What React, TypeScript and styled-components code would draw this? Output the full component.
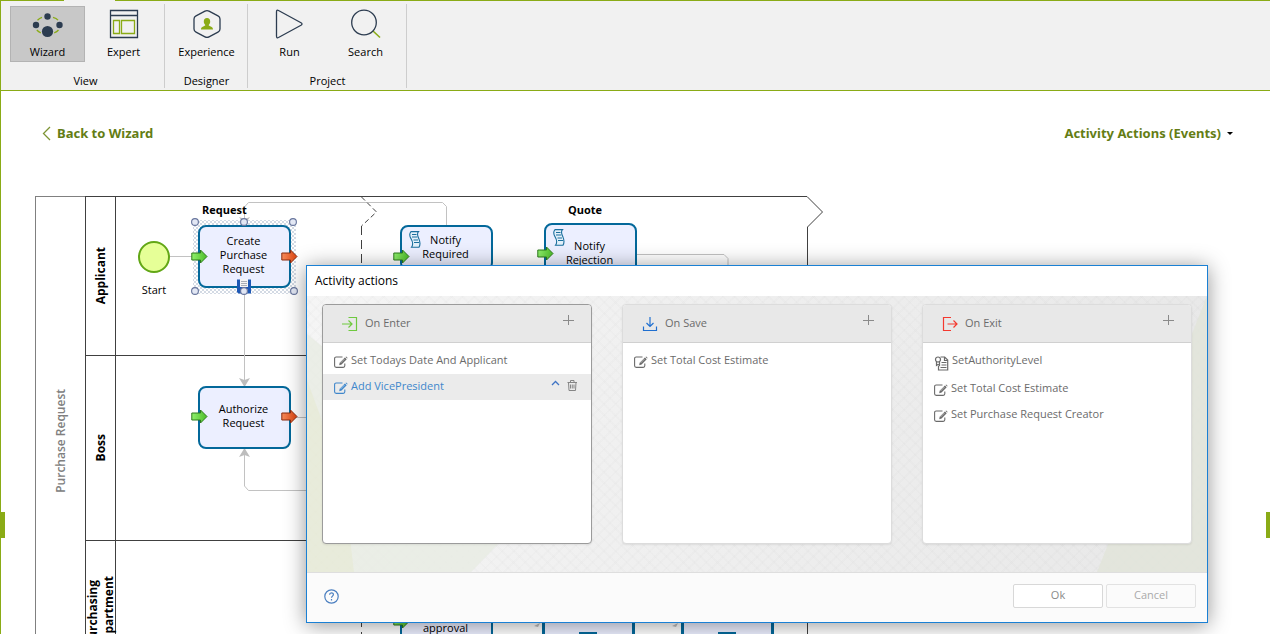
import React from "react";
import styled, { createGlobalStyle, css } from "styled-components";

const GREEN = "#8aab16";
const INK = "#2c3c50";

const GlobalStyle = createGlobalStyle`
  *, *::before, *::after { box-sizing: border-box; }
  body {
    margin: 0;
    background: #fff;
    color: #000;
    font: 11px/14px "Open Sans", "Noto Sans", sans-serif;
  }
  button { font: inherit; color: inherit; margin: 0; padding: 0; border: 0; background: none; cursor: pointer; }
  h1, h2, ul, li { margin: 0; padding: 0; list-style: none; font-weight: 400; }
  svg { display: block; flex: none; }
`;

const Page = styled.div`
  position: relative;
  display: flex;
  flex-direction: column;
  height: 100vh;
  overflow: hidden;
  border-left: 1px solid ${GREEN};
`;

/* ---------- ribbon ---------- */

const TabEdge = styled.div`
  display: flex;
  height: 1px;
  background: #f1f1f1;
  &::before { content: ""; width: 63px; background: ${GREEN}; }
  &::after { content: ""; flex: 1; margin-left: 51px; background: ${GREEN}; }
`;

const Ribbon = styled.header`
  display: flex;
  gap: 1px;
  padding: 3px 0 2px 6px;
  background: #f1f1f1;
  border-bottom: 1px solid ${GREEN};
`;

const RibbonGroup = styled.section`
  display: flex;
  flex-direction: column;
  justify-content: space-between;
  height: 84px;
  padding: 2px 3px 0;
  border-right: 1px solid #cdcdcd;
  text-align: center;
`;

const RibbonButtons = styled.div`
  display: flex;
  gap: 1px;
`;

const RibbonButton = styled.button<{ $active?: boolean }>`
  display: flex;
  flex-direction: column;
  align-items: center;
  gap: 4px;
  width: 75px;
  height: 56px;
  padding-top: 2px;
  border: 1px solid ${(p) => (p.$active ? "#b3b3b3" : "transparent")};
  background: ${(p) => (p.$active ? "#c8c8c8" : "transparent")};
`;

const GroupLabel = styled.h2`
  font-size: 11px;
  line-height: 14px;
`;

/* ---------- navigation row ---------- */

const NavRow = styled.nav`
  display: flex;
  justify-content: space-between;
  align-items: center;
  height: 84px;
  padding: 0 37px 0 41px;
`;

const NavLink = styled.a`
  display: flex;
  align-items: center;
  gap: 6px;
  color: #647d14;
  font: 700 13px/18px "Noto Sans", "Open Sans", sans-serif;
  text-decoration: none;
`;

const NavButton = styled(NavLink).attrs({ as: "button" })``;

const Caret = styled.span`
  border: 3px solid transparent;
  border-top-color: #000;
  border-bottom: 0;
`;

/* ---------- diagram ---------- */

const Canvas = styled.main`
  position: relative;
  flex: 1;
  min-height: 0;
  margin: 21px 0 0 34px;
`;

const Pool = styled.div`
  display: flex;
  width: 772px;
  border-left: 1px solid #808080;
`;

const VerticalText = styled.span`
  writing-mode: vertical-rl;
  transform: rotate(180deg);
  text-align: center;
`;

const PoolTitle = styled.div`
  display: flex;
  align-items: center;
  justify-content: center;
  width: 49px;
  border-top: 1px solid #808080;
  color: #808080;
  font-size: 12px;
  line-height: 16px;
  font-weight: 600;
`;

const Lanes = styled.div`
  flex: 1;
`;

const Lane = styled.div<{ $height: number }>`
  height: ${(p) => p.$height}px;
  border: solid #404040;
  border-width: 1px 0 0 1px;
`;

const LaneTitle = styled.div`
  display: flex;
  align-items: center;
  justify-content: center;
  width: 30px;
  height: 100%;
  border-right: 1px solid #404040;
  font-size: 12px;
  line-height: 16px;
  font-weight: 700;
`;

const Connectors = styled.svg`
  position: absolute;
  top: 0;
  left: 0;
`;

const placed = css<{ $x: number; $y: number }>`
  position: absolute;
  left: ${(p) => p.$x}px;
  top: ${(p) => p.$y}px;
`;

const PhaseLabel = styled.div<{ $x: number; $y: number }>`
  ${placed}
  font-weight: 700;
`;

const StartEvent = styled.div<{ $x: number; $y: number }>`
  ${placed}
  display: flex;
  flex-direction: column;
  align-items: center;
  gap: 10px;
  &::before {
    content: "";
    width: 32px;
    height: 32px;
    border: 2px solid #62a716;
    border-radius: 50%;
    background: #e6ff97;
  }
`;

const Task = styled.div<{ $x: number; $y: number; $h?: number; $thick?: boolean }>`
  ${placed}
  display: flex;
  align-items: center;
  justify-content: center;
  width: 93px;
  height: ${(p) => p.$h ?? 63}px;
  padding: 0 14px 3px 12px;
  border: ${(p) => (p.$thick ? 3 : 2)}px solid #03689a;
  border-radius: 8px;
  background: #ecefff;
  text-align: center;
`;

const SelectionHalo = styled.div<{ $x: number; $y: number }>`
  ${placed}
  width: 103px;
  height: 74px;
  background:
    radial-gradient(circle, #d3dae4 1px, transparent 1px) 0 0 / 4px 4px,
    radial-gradient(circle, #d3dae4 1px, #fff 1px) 2px 2px / 4px 4px;
`;

const Overlay = styled.svg<{ $x: number; $y: number }>`
  ${placed}
`;

const EdgeHandle = styled.div<{ $side: "left" | "right" }>`
  position: absolute;
  top: 512px;
  ${(p) => (p.$side === "left" ? "left: -1px" : "right: 0")};
  width: ${(p) => (p.$side === "left" ? 5 : 4)}px;
  height: 26px;
  background: ${GREEN};
`;

/* ---------- dialog ---------- */

const Dialog = styled.section`
  position: absolute;
  top: 265px;
  left: 305px;
  right: 62px;
  border: 1px solid #1a80d4;
  background: #fff;
  box-shadow: 0 2px 20px rgba(0, 0, 0, 0.42);
`;

const DialogTitle = styled.h1`
  padding: 7px 8px;
  font-size: 12px;
  line-height: 16px;
`;

const DialogBody = styled.div`
  position: relative;
  display: grid;
  grid-template-columns: repeat(3, 1fr);
  gap: 30px;
  padding: 8px 15px 28px;
  background:
    repeating-linear-gradient(45deg, rgba(0, 0, 0, 0.01) 0 2px, transparent 2px 8px),
    repeating-linear-gradient(-45deg, rgba(0, 0, 0, 0.01) 0 2px, transparent 2px 8px),
    linear-gradient(100deg, #f5f5f5, #eeeeee 50%, #e8e8e8);
`;

const Facets = styled.svg<{ $right?: boolean }>`
  position: absolute;
  bottom: 0;
  ${(p) => (p.$right ? "right: 0" : "left: 0")};
  opacity: 0.8;
`;

const Card = styled.section<{ $active?: boolean }>`
  position: relative;
  min-height: 240px;
  border: 1px solid ${(p) => (p.$active ? "#9b9b9b" : "#dcdcdc")};
  border-radius: 4px;
  background: #fff;
  color: #6b6b6b;
  box-shadow: 0 1px 2px rgba(0, 0, 0, 0.08);
  overflow: hidden;
`;

const CardHeader = styled.header`
  display: flex;
  align-items: center;
  gap: 7px;
  height: 38px;
  padding: 0 17px 0 19px;
  border-bottom: 1px solid #d0d0d0;
  background: #e8e8e8;
`;

const CardTitle = styled.h2`
  flex: 1;
  padding-bottom: 2px;
  font-size: 11px;
  line-height: 14px;
`;

const IconButton = styled.button`
  display: flex;
  padding-bottom: 8px;
`;

const ActionList = styled.ul`
  padding-top: 5px;
`;

const ActionRow = styled.li<{ $selected?: boolean; $tall?: boolean }>`
  display: flex;
  align-items: center;
  gap: 3px;
  height: ${(p) => (p.$tall ? 28 : 26)}px;
  padding: 0 13px ${(p) => (p.$tall ? 4 : 2)}px 11px;
  background: ${(p) => (p.$selected ? "#ebebeb" : "transparent")};
  color: ${(p) => (p.$selected ? "#4087cb" : "#6b6b6b")};
`;

const ActionIcon = styled.span<{ $tall?: boolean }>`
  padding-top: ${(p) => (p.$tall ? 6 : 3)}px;
`;

const ActionName = styled.span`
  flex: 1;
`;

const RowTools = styled.span`
  display: flex;
  align-items: center;
  gap: 7px;
  padding-bottom: 2px;
`;

const DialogFooter = styled.footer`
  display: flex;
  align-items: center;
  gap: 3px;
  height: 50px;
  padding: 0 11px 3px 17px;
  border-top: 1px solid #dedede;
  background: #fbfbfb;
`;

const HelpButton = styled.button`
  margin-right: auto;
`;

const DialogButton = styled.button<{ $muted?: boolean }>`
  width: 90px;
  height: 24px;
  padding-bottom: 2px;
  border: 1px solid ${(p) => (p.$muted ? "#e2e2e2" : "#d8d8d8")};
  border-radius: 2px;
  background: ${(p) => (p.$muted ? "#fbfbfb" : "#fff")};
  color: ${(p) => (p.$muted ? "#aaaaaa" : "#8a8a8a")};
`;

/* ---------- icons ---------- */

const ribbonIcon = { width: 32, height: 32, viewBox: "0 0 32 32", fill: "none", stroke: INK, strokeWidth: 1.3 };

const WizardIcon = () => (
  <svg {...ribbonIcon}>
    <path
      d="M5.500 11.200Q7.500 9 10 8.300M21 8.300Q24.500 9.200 26 11.200M4.800 21Q6.500 23 8.800 23.800M22.200 23.800Q25 23 26.500 21"
      stroke={GREEN}
    />
    <g fill={INK} stroke="none">
      <circle cx="15.500" cy="7.500" r="3.200" />
      <circle cx="4" cy="16" r="3.200" />
      <circle cx="27.500" cy="16" r="3.200" />
      <circle cx="15.500" cy="22.500" r="5.600" />
    </g>
  </svg>
);

const ExpertIcon = () => (
  <svg {...ribbonIcon}>
    <path d="M2.500 1.500h27v27h-27zM2.500 6.500h27" />
    <path d="M5.500 11.500h6v13h-6zM13.500 11.500h13v13h-13z" stroke={GREEN} />
  </svg>
);

const ExperienceIcon = () => (
  <svg {...ribbonIcon}>
    <path d="M14 2.100q2-1.100 4 0l9 4.700q2 1 2 3.200v10q0 2.200-2 3.200l-9 4.700q-2 1.100-4 0l-9-4.700q-2-1-2-3.200v-10q0-2.200 2-3.200z" />
    <path
      d="M16 9a3.200 3.500 0 0 1 3.200 3.500c0 1.800-.7 2.700-1.500 3.500 0 1.500 4.300 1 4.300 4.500H10c0-3.500 4.300-3 4.300-4.500-.8-.8-1.500-1.700-1.500-3.500A3.200 3.500 0 0 1 16 9z"
      fill={GREEN}
      stroke="none"
    />
  </svg>
);

const RunIcon = () => (
  <svg {...ribbonIcon}>
    <path d="M2.500 3q0-2.500 2-1.500l22.500 12.300q2 1.200 0 2.400l-22.500 12.300q-2 1-2-1.500z" />
  </svg>
);

const SearchIcon = () => (
  <svg {...ribbonIcon}>
    <path d="M23 22l7 6.500" stroke={GREEN} strokeWidth="1.600" />
    <circle cx="14" cy="13.500" r="12.300" />
  </svg>
);

const stageIcon = { width: 16, height: 16, viewBox: "0 0 16 16", fill: "none", strokeWidth: 1.2 };

const EnterIcon = () => (
  <svg {...stageIcon} stroke="#6fc93f">
    <path d="M6.500 1.500h8v13h-8M0 8h10M6.500 4.500L10 8l-3.500 3.500" />
  </svg>
);

const SaveIcon = () => (
  <svg {...stageIcon} stroke="#1f6fd0">
    <path d="M1.500 10.500v4h13v-4M8 1v9M4.500 7L8 10.500 11.500 7" />
  </svg>
);

const ExitIcon = () => (
  <svg {...stageIcon} stroke="#f4392f">
    <path d="M9 1.500H1.500v13H9M5.500 8H15M11.500 4.500L15 8l-3.500 3.500" />
  </svg>
);

const PlusIcon = () => (
  <svg width="12" height="12" viewBox="0 0 12 12" stroke="#8a8a8a">
    <path d="M6.500 1v10M1 6.500h11" />
  </svg>
);

const EditIcon = () => (
  <svg width="14" height="12" viewBox="0 0 14 12" fill="none" stroke="currentColor" strokeWidth="1.100">
    <path d="M8.500 1H2.200Q.6 1 .6 2.600v7.200q0 1.600 1.600 1.600h7q1.600 0 1.600-1.600V7.500" />
    <path d="M5.200 9.200l.5-2.500L10.900 1.500l1.800 1.800-5.100 5.200z" fill="currentColor" stroke="none" />
    <path d="M11.500 1l.7-.6 1.500 1.500-.6.700z" fill="currentColor" stroke="none" />
    <path d="M6.500 7l4-4" stroke="#fff" strokeWidth=".5" />
  </svg>
);

const PolicyIcon = () => (
  <svg width="15" height="15" viewBox="0 0 15 15" fill="none" stroke="currentColor" strokeWidth="1.200">
    <path d="M6.500 1h4.200l3 3v10H4.500v-4M10.500 1v3.500h3.200" />
    <circle cx="4" cy="3.500" r="2.500" />
    <path d="M2.500 5.500v4l1.500-1 1.500 1v-4M7.500 6.500h5M7.500 9h5M6.500 11.500h6" />
  </svg>
);

const ChevronUpIcon = () => (
  <svg width="9" height="10" viewBox="0 0 9 10" fill="none" stroke="#3f74c4" strokeWidth="1.300">
    <path d="M1 5l3.500-3.500L8 5" />
  </svg>
);

const TrashIcon = () => (
  <svg width="11" height="11" viewBox="0 0 11 11" fill="none" stroke="#858585">
    <path d="M.5 2.500h9.500M3.500 2.500v-2h3.500v2M1.500 2.500l.5 8h6.500l.5-8M3.500 4.500v4M5.250 4.500v4M7 4.500v4" />
  </svg>
);

const HelpIcon = () => (
  <svg width="15" height="15" viewBox="0 0 15 15" fill="none" stroke="#4b7fc0" strokeWidth="1.200">
    <circle cx="7.500" cy="7.500" r="6.700" />
    <path d="M5.600 5.800c0-2.600 3.800-2.500 3.800-.2 0 1.500-1.900 1.500-1.900 3.200M7.500 10v1.400" />
  </svg>
);

const BackIcon = () => (
  <svg width="9" height="15" viewBox="0 0 9 15" fill="none" stroke="#7d9434" strokeWidth="1.300">
    <path d="M8 1L1.500 7.500 8 14" />
  </svg>
);

const ScriptGlyph = ({ x, y }: { x: number; y: number }) => (
  <Overlay $x={x} $y={y} width="12" height="17" viewBox="0 0 12 17" fill="none" stroke="#1a6f9d" strokeWidth="1.100">
    <path
      d="M2 .6h7.500c-2 2-1 4.500.5 7.500 1.500 3.500 1.500 5.500 0 8.200H2.500c1.500-2 1.500-5-.3-8.200C.3 5 .3 2.500 2 .6z"
      fill="#e3f0fa"
    />
    <path d="M3 3.500h4.500M3 6h5M4.500 9h4.500M5 11.500h5" />
  </Overlay>
);

const ArrowMark = ({ x, y, tone }: { x: number; y: number; tone: "in" | "out" }) => (
  <Overlay $x={x} $y={y} width="17" height="15" viewBox="0 0 17 15">
    <defs>
      <linearGradient id="arrow-in" x2="1">
        <stop stopColor="#8ff06c" />
        <stop offset="1" stopColor="#4cbc28" />
      </linearGradient>
      <linearGradient id="arrow-out" x2="1">
        <stop stopColor="#f58a5c" />
        <stop offset="1" stopColor="#dd4510" />
      </linearGradient>
    </defs>
    <path
      d="M.8 4h8.700V1l6.500 6.500-6.500 6.500v-3H.8z"
      fill={`url(#arrow-${tone})`}
      stroke={tone === "in" ? "#2d7a1c" : "#8a2d10"}
    />
  </Overlay>
);

const FloppyMark = ({ x, y }: { x: number; y: number }) => (
  <Overlay $x={x} $y={y} width="14" height="15" viewBox="0 0 14 15">
    <path d="M0 .5h14v14H1.500L0 13z" fill="#1d58b5" />
    <path d="M3 0h8v8H3z" fill="#f4f4f4" />
    <path d="M4 2.500h6M4 4.500h6M4 6.500h6" stroke="#a9adb5" />
    <path d="M4 10h6.500v4.500H4z" fill="#d9dce2" />
  </Overlay>
);

const HANDLES = [
  [195, 222], [244, 222], [293, 222],
  [195, 291], [244, 291], [294, 291],
];

const SelectionHandles = () => (
  <Connectors width="300" height="110" viewBox="35 196 300 110" fill="#e2e7f4" stroke="#66749c" strokeWidth="1.100">
    {HANDLES.map(([cx, cy]) => (
      <circle key={`${cx}-${cy}`} cx={cx} cy={cy} r="3.400" />
    ))}
  </Connectors>
);

/* Sequence flows, phase separators and arrow heads behind the tasks. */
const DiagramLines = () => (
  <Connectors width="800" height="438" viewBox="35 196 800 438" fill="none">
    <g stroke="#c2c2c2">
      <path d="M170 256.500h24" />
      <path d="M244.500 222v-15l4-4.500h194l4 4v20" />
      <path d="M244.500 290v92" />
      <path d="M244.500 452v34l4 4.500h80" />
      <path d="M295 417.500h30" />
      <path d="M636 254.500h88l4 4v20" />
    </g>
    <g fill="#bdbdbd">
      <path d="M239 378l5.500 2 5.500-2-5.500 9z" />
      <path d="M239 457l5.500-9 5.500 9-5.500-2z" />
      <path d="M239 217l5.500 2 5.500-2-5.500 8z" />
      <path d="M534 626l6-3-2 4z" />
      <path d="M672 626l6-3-2 4z" />
    </g>
    <g stroke="#404040">
      <path d="M361.500 197l15 15-15 14" strokeDasharray="5 3" />
      <path d="M361.500 226V640" strokeDasharray="9 5" />
      <path d="M807 196.500l15.500 15.500-15 15V640" />
    </g>
  </Connectors>
);

/* ---------- content ---------- */

type IconComponent = () => React.JSX.Element;

type Stage = {
  title: string;
  Icon: IconComponent;
  active?: boolean;
  actions: { name: string; policy?: boolean; selected?: boolean }[];
};

const STAGES: Stage[] = [
  {
    title: "On Enter",
    Icon: EnterIcon,
    active: true,
    actions: [{ name: "Set Todays Date And Applicant" }, { name: "Add VicePresident", selected: true }],
  },
  { title: "On Save", Icon: SaveIcon, actions: [{ name: "Set Total Cost Estimate" }] },
  {
    title: "On Exit",
    Icon: ExitIcon,
    actions: [
      { name: "SetAuthorityLevel", policy: true },
      { name: "Set Total Cost Estimate" },
      { name: "Set Purchase Request Creator" },
    ],
  },
];

const RIBBON: { label: string; items: { name: string; Icon: IconComponent; active?: boolean }[] }[] = [
  { label: "View", items: [{ name: "Wizard", Icon: WizardIcon, active: true }, { name: "Expert", Icon: ExpertIcon }] },
  { label: "Designer", items: [{ name: "Experience", Icon: ExperienceIcon }] },
  { label: "Project", items: [{ name: "Run", Icon: RunIcon }, { name: "Search", Icon: SearchIcon }] },
];

const Diagram = () => (
  <Canvas>
    <Pool>
      <PoolTitle><VerticalText>Purchase Request</VerticalText></PoolTitle>
      <Lanes>
        <Lane $height={159}><LaneTitle><VerticalText>Applicant</VerticalText></LaneTitle></Lane>
        <Lane $height={185}><LaneTitle><VerticalText>Boss</VerticalText></LaneTitle></Lane>
        <Lane $height={144}><LaneTitle><VerticalText>Purchasing<br />Department</VerticalText></LaneTitle></Lane>
      </Lanes>
    </Pool>
    <SelectionHalo $x={158} $y={24} />
    <DiagramLines />
    <PhaseLabel $x={167} $y={7}>Request</PhaseLabel>
    <PhaseLabel $x={533} $y={7}>Quote</PhaseLabel>
    <StartEvent $x={103} $y={45}>Start</StartEvent>
    <Task $x={163} $y={29}>Create Purchase Request</Task>
    <ArrowMark x={156} y={53} tone="in" />
    <ArrowMark x={246} y={53} tone="out" />
    <FloppyMark x={202} y={83} />
    <SelectionHandles />
    <Task $x={163} $y={190}>Authorize Request</Task>
    <ArrowMark x={156} y={213} tone="in" />
    <ArrowMark x={246} y={213} tone="out" />
    <Task $x={365} $y={29} $h={46}>Notify Required</Task>
    <ScriptGlyph x={374} y={35} />
    <ArrowMark x={358} y={53} tone="in" />
    <Task $x={509} $y={27}>Notify Rejection</Task>
    <ScriptGlyph x={518} y={33} />
    <ArrowMark x={502} y={50} tone="in" />
    <Task $x={365} $y={390} $h={72}>Purchase approval</Task>
    <ArrowMark x={358} y={418} tone="in" />
    <Task $x={507} $y={386} $thick />
    <Task $x={646} $y={386} $thick />
    <Overlay $x={544} $y={436} width="160" height="4" fill="#03689a">
      <path d="M0 0h18v4H0zM139 0h18v4h-18z" />
    </Overlay>
  </Canvas>
);

const StageCard = ({ title, Icon, active, actions }: Stage) => (
  <Card $active={active}>
    <CardHeader>
      <Icon />
      <CardTitle>{title}</CardTitle>
      <IconButton aria-label={`Add action ${title}`}><PlusIcon /></IconButton>
    </CardHeader>
    <ActionList>
      {actions.map(({ name, selected, policy }) => (
        <ActionRow key={name} $selected={selected} $tall={policy}>
          <ActionIcon $tall={policy}>{policy ? <PolicyIcon /> : <EditIcon />}</ActionIcon>
          <ActionName>{name}</ActionName>
          {selected && (
            <RowTools>
              <button aria-label="Move up"><ChevronUpIcon /></button>
              <button aria-label="Delete"><TrashIcon /></button>
            </RowTools>
          )}
        </ActionRow>
      ))}
    </ActionList>
  </Card>
);

export default function App() {
  return (
    <Page>
      <GlobalStyle />
      <TabEdge />
      <Ribbon>
        {RIBBON.map((group) => (
          <RibbonGroup key={group.label}>
            <RibbonButtons>
              {group.items.map(({ name, Icon, active }) => (
                <RibbonButton key={name} $active={active}>
                  <Icon />
                  {name}
                </RibbonButton>
              ))}
            </RibbonButtons>
            <GroupLabel>{group.label}</GroupLabel>
          </RibbonGroup>
        ))}
      </Ribbon>
      <NavRow>
        <NavLink href="#wizard"><BackIcon />Back to Wizard</NavLink>
        <NavButton>Activity Actions (Events)<Caret /></NavButton>
      </NavRow>
      <Diagram />
      <EdgeHandle $side="left" />
      <EdgeHandle $side="right" />
      <Dialog role="dialog" aria-labelledby="dialog-title">
        <DialogTitle id="dialog-title">Activity actions</DialogTitle>
        <DialogBody>
          <Facets width="220" height="276" viewBox="0 0 220 276">
            <path d="M0 38L220 218 164 276H0z" fill="#e9ede4" />
            <path d="M0 84Q38 180 47 276H0z" fill="#e6ead5" />
          </Facets>
          <Facets $right width="110" height="276" viewBox="0 0 110 276">
            <path d="M110 0L0 276h110z" fill="#e2e5da" />
          </Facets>
          {STAGES.map((stage) => (
            <StageCard key={stage.title} {...stage} />
          ))}
        </DialogBody>
        <DialogFooter>
          <HelpButton aria-label="Help"><HelpIcon /></HelpButton>
          <DialogButton>Ok</DialogButton>
          <DialogButton $muted>Cancel</DialogButton>
        </DialogFooter>
      </Dialog>
    </Page>
  );
}
